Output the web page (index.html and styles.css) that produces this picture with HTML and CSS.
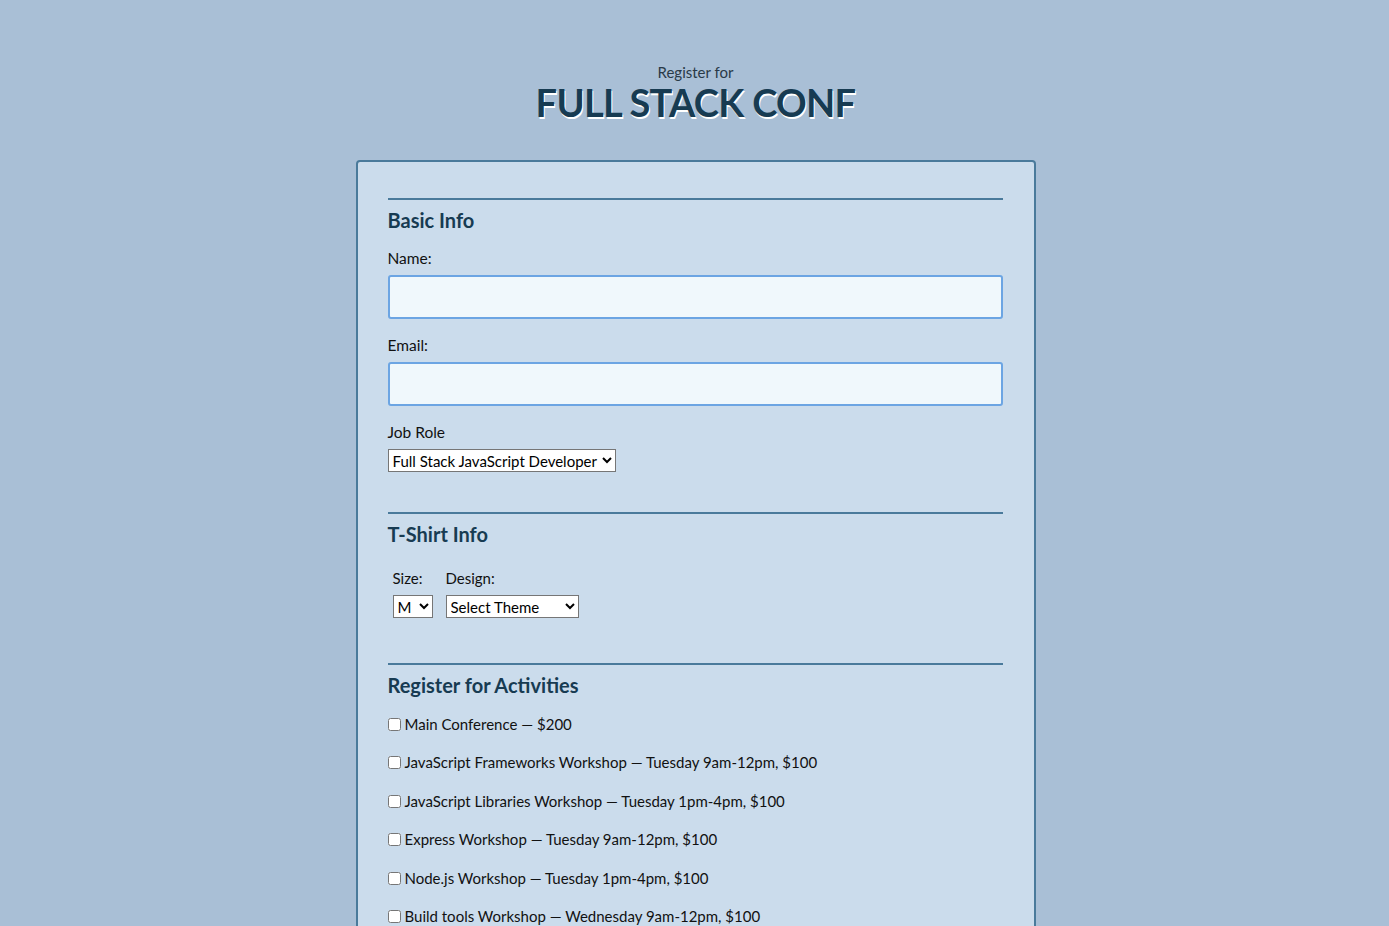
FILE: index.html
```html
<!DOCTYPE html>
<html lang="en">
<head>
<meta charset="utf-8">
<title>Full Stack Conf</title>
<link rel="stylesheet" href="styles.css">
</head>
<body>
<header class="header">
  <p class="subtitle">Register for</p>
  <h1 class="title">FULL STACK CONF</h1>
</header>
<form class="panel">
  <section class="section section-basic">
    <h2 class="section-title">Basic Info</h2>
    <label class="field-label" for="name">Name:</label>
    <input class="text-input" type="text" id="name">
    <label class="field-label" for="mail">Email:</label>
    <input class="text-input" type="email" id="mail">
    <label class="field-label" for="title">Job Role</label>
    <select class="select select-role" id="title">
      <option>Full Stack JavaScript Developer</option>
    </select>
  </section>
  <section class="section section-shirt">
    <h2 class="section-title">T-Shirt Info</h2>
    <div class="shirt-row">
      <div class="shirt-group">
        <label class="small-label" for="size">Size:</label>
        <select class="select select-size" id="size"><option>M</option></select>
      </div>
      <div class="shirt-group">
        <label class="small-label" for="design">Design:</label>
        <select class="select select-design" id="design"><option>Select Theme</option></select>
      </div>
    </div>
  </section>
  <section class="section section-activities">
    <h2 class="section-title">Register for Activities</h2>
    <div class="activities">
      <label class="activity"><input class="check" type="checkbox">Main Conference — $200</label>
      <label class="activity"><input class="check" type="checkbox">JavaScript Frameworks Workshop — Tuesday 9am-12pm, $100</label>
      <label class="activity"><input class="check" type="checkbox">JavaScript Libraries Workshop — Tuesday 1pm-4pm, $100</label>
      <label class="activity"><input class="check" type="checkbox">Express Workshop — Tuesday 9am-12pm, $100</label>
      <label class="activity"><input class="check" type="checkbox">Node.js Workshop — Tuesday 1pm-4pm, $100</label>
      <label class="activity"><input class="check" type="checkbox">Build tools Workshop — Wednesday 9am-12pm, $100</label>
    </div>
  </section>
</form>
</body>
</html>
```
FILE: styles.css
```css
html, body {
  margin: 0;
  padding: 0;
}
body {
  background: #a9bfd6;
  font-family: Lato, "Open Sans", sans-serif;
  color: #111;
}
.header {
  text-align: center;
  padding-top: 62px;
  padding-left: 2px;
}
.subtitle {
  margin: 0;
  font-size: 15px;
  line-height: 20px;
  color: #2a3a48;
}
.title {
  margin: -2px 0 0;
  font-size: 38px;
  line-height: 44px;
  font-weight: 700;
  letter-spacing: -0.7px;
  color: #173b52;
  text-shadow: 1px 2px 0 #fff;
}
.panel {
  width: 615px;
  margin: 36px auto 0;
  padding: 36px 31px 60px 30px;
  border: 2px solid #4a7a9b;
  border-radius: 4px;
  background: #cbdcec;
  position: relative;
  left: 1px;
}
.section {
  border-top: 2px solid #4a7a9b;
}
.section-basic { padding-bottom: 40px; }
.section-shirt { padding-bottom: 45px; }
.section-title {
  margin: 8px 0 0;
  font-size: 20px;
  line-height: 24px;
  font-weight: 700;
  color: #173b52;
}
.field-label {
  display: block;
  margin-top: 16px;
  font-size: 15.5px;
  line-height: 21px;
}
.text-input {
  display: block;
  box-sizing: border-box;
  width: 100%;
  height: 44px;
  margin: 6px 0 0;
  border: 2px solid #6ca5e3;
  border-radius: 3px;
  background: #f0f8fc;
}
.select {
  display: block;
  box-sizing: border-box;
  height: 23px;
  margin: 6px 0 0;
  font-family: Lato, "Open Sans", sans-serif;
  font-size: 15px;
  color: #000;
  background: #fff;
}
.select-role { width: 228px; }
.select-size { width: 40px; }
.select-design { width: 133px; }
.shirt-row {
  display: flex;
  gap: 13px;
  margin-top: 22px;
  padding-left: 5px;
}
.small-label {
  display: block;
  font-size: 15px;
  line-height: 21px;
}
.activities {
  margin-top: 17px;
  display: flex;
  flex-direction: column;
  gap: 17.4px;
}
.activity {
  display: flex;
  align-items: center;
  font-size: 15px;
  line-height: 21px;
}
.check {
  width: 13px;
  height: 13px;
  margin: 0 4px 0 0;
}
```
